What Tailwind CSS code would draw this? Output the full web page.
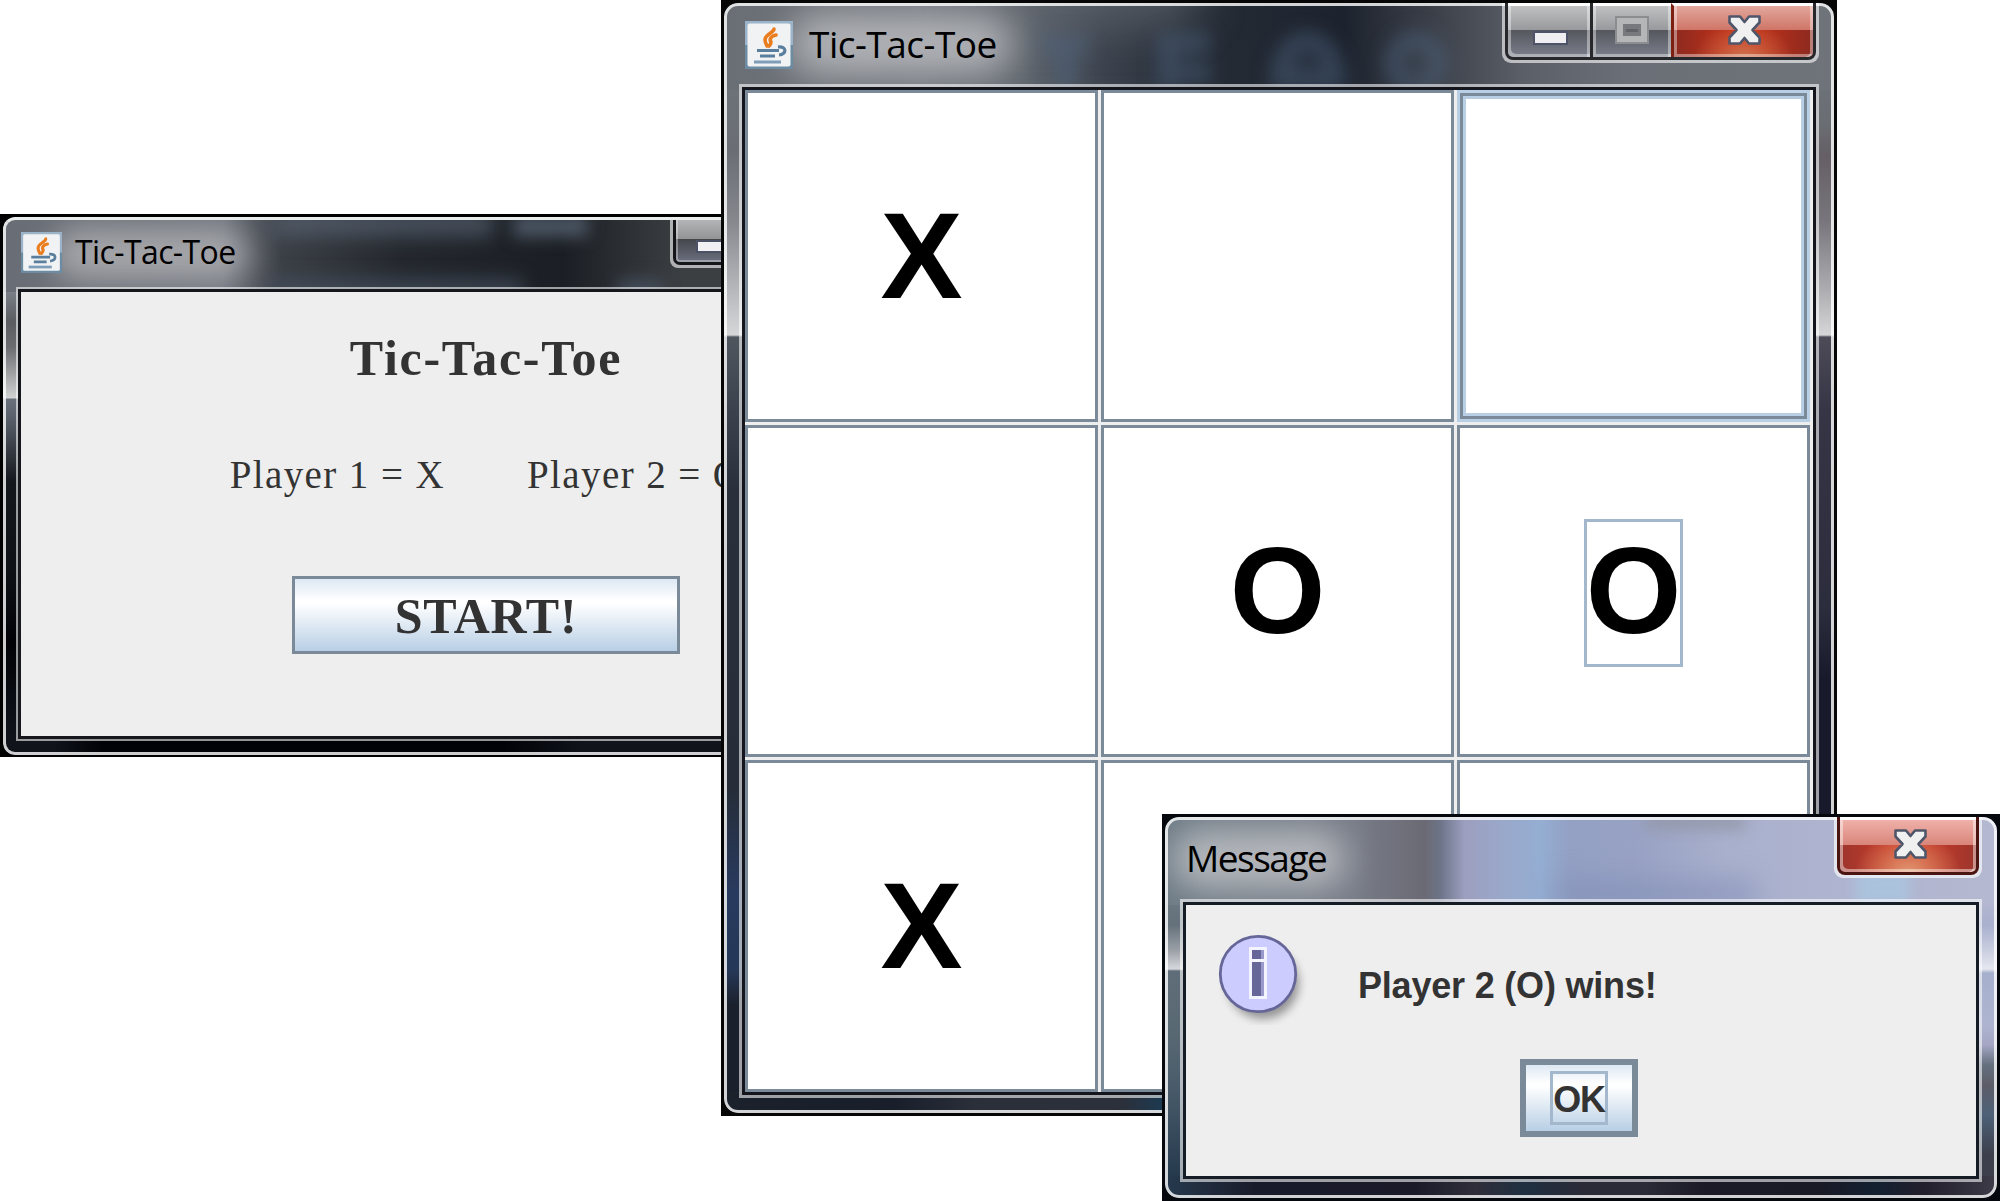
<!DOCTYPE html>
<html lang="en">
<head>
<meta charset="utf-8">
<title>Tic-Tac-Toe</title>
<script src="https://cdn.jsdelivr.net/npm/@tailwindcss/browser@4"></script>
</head>
<body class="relative w-[2000px] h-[1201px] overflow-hidden bg-white">

<svg class="hidden">
  <symbol id="java" viewBox="0 0 48 48">
    <rect width="48" height="48" fill="#6c8ca3"/>
    <rect width="48" height="24" fill="#9bb4c9"/>
    <rect x="2.500" y="2.500" width="43" height="43" rx="2" fill="#f1f2f3"/>
    <g fill="none" stroke="#ea7d1e" stroke-width="3.600" stroke-linecap="round">
      <path d="M29 8c0 4-9 5-9 11 0 2 1 4 2 6"/>
      <path d="M31 14c-5 1-7 4-5 7 0 2-1 3-2 4"/>
    </g>
    <g fill="none" stroke="#5a7f9e" stroke-width="3.200">
      <path d="M12 29.500h22M15 35h15"/>
      <path d="M33 26c9-1 9 7 1 8"/>
      <path d="M9 41h27" stroke="#7d9db8"/>
    </g>
  </symbol>
  <symbol id="close" viewBox="0 0 33 30">
    <path d="M1.500 1.500h10.500l4.500 5.500L21 1.500h10.500v6L24.500 15l7 7.500v6H21L16.500 23 12 28.500H1.500v-6L8.500 15l-7-7.500z" fill="#f0f0f0" stroke="#50566a" stroke-width="2.600" stroke-linejoin="round"/>
  </symbol>
</svg>

<!-- Start window -->
<div class="absolute isolate left-0 top-[214px] w-[972px] h-[543px] bg-black p-[3px] pb-[2px]">
  <div class="relative w-full h-full rounded-[12px] overflow-hidden flex flex-col bg-[#05070c]">
    <div class="relative h-[75px] flex items-start bg-[linear-gradient(90deg,#686d76_0,#6d7179_90px,#6f747d_220px,#3b3f46_280px,#24282e_400px,#1b1e24_560px,#3c3f42_680px)]">
      <div class="absolute left-[50px] top-[12px] w-[195px] h-[50px] rounded-full bg-[#b4b4b6]/80 blur-[15px]"></div>
      <div class="absolute left-[270px] top-[-4px] w-[220px] h-[22px] bg-[#5d6878]/70 blur-[10px]"></div>
      <div class="absolute left-[510px] top-[-2px] w-[75px] h-[22px] bg-[#5f6e7f]/70 blur-[8px]"></div>
      <div class="absolute left-[270px] top-[62px] w-[250px] h-[20px] bg-[#475363]/70 blur-[9px]"></div>
      <div class="absolute left-[615px] top-[62px] w-[45px] h-[20px] bg-[#475363]/80 blur-[8px]"></div>
      <svg class="relative ml-[18px] mt-[15px] w-[41px] h-[41px]"><use href="#java"/></svg>
      <div class="relative ml-[13px] mt-[14px] text-[32px] leading-[42px] text-black font-['Open_Sans',sans-serif] tracking-[-0.6px] whitespace-nowrap">Tic-Tac-Toe</div>
      <div class="absolute left-[667px] top-0 w-[240px] h-[51px] rounded-b-[8px] bg-white/60 px-[3px] pb-[3px]">
        <div class="w-full h-full rounded-b-[7px] bg-[#15161a] px-[3px] pb-[3px] flex">
          <div class="w-full h-full rounded-b-[4px] bg-[linear-gradient(#b9babb,#929395_50%,#45474c_50%,#6c7080)] shadow-[inset_0_0_0_2px_rgba(255,255,255,.35)] pt-[25px] pl-[22px]">
            <div class="w-[30px] h-[9px] bg-[#f1f1f3] shadow-[0_0_0_2px_#4d5166]"></div>
          </div>
        </div>
      </div>
    </div>
    <div class="flex h-[444px]">
      <div class="w-[18px] bg-[linear-gradient(#7a7f88_0,#5a5c60_30px,#6a6c70_55px,#d2d3d3_106px,#6b717c_107px,#5a616c_125px,#14171c_190px,#0e1116_280px,#000207_350px,#10131a_444px)]"></div>
      <div class="relative z-10 w-[930px] h-full bg-[#eee] shadow-[0_0_0_3px_#15171c,0_0_0_5px_rgba(255,255,255,.58)] flex flex-col items-center text-[#333] font-['Liberation_Serif',serif]">
        <div class="mt-[37px] text-[50px] leading-[58px] font-bold tracking-[1.7px] whitespace-nowrap">Tic-Tac-Toe</div>
        <div class="mt-[65px] flex gap-[82px] text-[39px] leading-[46px] tracking-[1.4px] whitespace-nowrap"><span>Player 1 = X</span><span>Player 2 = O</span></div>
        <div class="mt-[78px] w-[388px] h-[78px] border-[3px] border-[#7a8a99] bg-[linear-gradient(#dde8f3,#fff_30%,#fff_34%,#b8cfe5)] text-[50px] leading-[74px] font-bold text-center tracking-[0.8px]">START!</div>
      </div>
      <div class="flex-1"></div>
    </div>
    <div class="flex-1 bg-[linear-gradient(90deg,#10131a_50px,#000207_100px,#000207_500px,#10131a_580px)]"></div>
    <div class="absolute inset-0 rounded-[12px] border-[3px] border-white/80 border-t-[#e8ecea]"></div>
  </div>
</div>

<!-- Board window -->
<div class="absolute isolate left-[721px] top-0 w-[1116px] h-[1116px] bg-[#060607] p-[3px]">
  <div class="relative w-full h-full rounded-[14px] overflow-hidden flex flex-col">
    <div class="relative h-[87px] flex items-start bg-[linear-gradient(90deg,#6a6f75_0,#6e7279_200px,#5f656d_300px,#3c434e_380px,#262d37_460px,#1d232e_620px,#3c4049_710px,#5b6068_800px,#6a6f77_900px,#6f747a_1110px)]">
      <div class="absolute left-[240px] -top-[40px] w-[240px] h-[66px] rounded-full bg-[#626870]/60 blur-[20px]"></div>
      <div class="absolute left-[65px] top-[10px] w-[225px] h-[62px] rounded-full bg-[#c0c2c6]/80 blur-[18px]"></div>
      <svg class="absolute left-0 top-0 w-[780px] h-[87px] blur-[9px]" fill="none" stroke="#4d6480" stroke-opacity=".5" stroke-width="20">
        <path d="M316 42h48M342 42v50"/>
        <path d="M444 30v60M440 40h46M440 70h46"/>
        <path d="M556 78c2-52 52-52 56 0zM560 74h48"/>
        <circle cx="692" cy="60" r="22"/>
      </svg>
      <svg class="relative ml-[21px] mt-[18px] w-[48px] h-[48px]"><use href="#java"/></svg>
      <div class="relative ml-[16px] mt-[16px] text-[37px] leading-[50px] text-black font-['Open_Sans',sans-serif] tracking-[-0.5px] whitespace-nowrap">Tic-Tac-Toe</div>
      <div class="absolute right-[15px] top-0 z-30 w-[317px] h-[60px] rounded-b-[9px] bg-white/60 px-[3px] pb-[3px]">
        <div class="w-full h-full rounded-b-[8px] bg-[#26282c] px-[3px] pb-[3px] flex gap-[3px]">
          <div class="w-[82px] rounded-bl-[5px] border-t-[3px] border-white bg-[linear-gradient(#bfc1c3,#97999c_47%,#54575d_47%,#7b7f8c)] shadow-[inset_3px_-3px_0_rgba(255,255,255,.4),inset_-3px_0_0_rgba(255,255,255,.4)] pt-[27px] pl-[27px]">
            <div class="w-[31px] h-[10px] bg-[#efeff1] shadow-[0_0_0_2px_#4f5368]"></div>
          </div>
          <div class="w-[78px] border-t-[3px] border-white bg-[linear-gradient(#bfc1c3,#97999c_47%,#54575d_47%,#7b7f8c)] shadow-[inset_3px_-3px_0_rgba(255,255,255,.4),inset_-3px_0_0_rgba(255,255,255,.4)] pt-[12px] pl-[24px]">
            <div class="w-[30px] h-[24px] border-[6px] border-[#b5b6b8] bg-[#77797c] shadow-[0_0_0_2px_#8b8d90]"><div class="ml-[3px] mt-[5px] w-[12px] h-[3px] bg-[#5f6266]"></div></div>
          </div>
          <div class="relative -ml-[3px] w-[142px] border-l-[3px] border-l-[#7d2014] rounded-br-[5px] border-t-[3px] border-t-white bg-[linear-gradient(#e2a79c,#cf7567_47%,transparent_47%),radial-gradient(ellipse_at_50%_100%,#d0714c_0,transparent_50%),linear-gradient(90deg,#8c2a20,#c03018_40%,#c03018_60%,#8c2a20)] shadow-[inset_3px_-3px_0_rgba(255,255,255,.4),inset_-3px_0_0_rgba(255,255,255,.4)] flex justify-center pt-[9px] pl-[2px]">
            <svg class="w-[33px] h-[30px]"><use href="#close"/></svg>
          </div>
        </div>
      </div>
    </div>
    <div class="flex h-[1002px]">
      <div class="w-[21px] bg-[linear-gradient(#6d7279_0,#6a6d74_60px,#85878d_130px,#d6d7d9_245px,#50565e_247px,#3b424d_320px,#292f3b_400px,#262d39_700px,#283a5e_800px,#263858_880px,#1b212c_915px)]"></div>
      <div class="relative z-10 w-[1068px] h-full bg-[#eee] shadow-[0_0_0_3px_#15161d,0_0_0_6px_rgba(255,255,255,.58)]">
        <div class="grid grid-cols-[353px_353px_353px] grid-rows-[332px_332px_332px] gap-[3px] text-black text-[123px] leading-none font-bold font-['Liberation_Sans',Arial,sans-serif]">
          <div class="flex items-center justify-center bg-white border-[3px] border-[#7a8a99] pb-[2px]">X</div>
          <div class="bg-white border-[3px] border-[#7a8a99]"></div>
          <div class="bg-white border-[3px] border-[#b8cfe5] shadow-[inset_0_0_0_3px_#7a8a99,inset_0_0_0_6px_#b8cfe5]"></div>
          <div class="bg-white border-[3px] border-[#7a8a99]"></div>
          <div class="flex items-center justify-center bg-white border-[3px] border-[#7a8a99] pb-[2px]">O</div>
          <div class="flex items-center justify-center bg-white border-[3px] border-[#7a8a99] pt-[3px]"><span class="w-[99px] h-[148px] border-[3px] border-[#a3b8cc] flex items-center justify-center pb-[5px]">O</span></div>
          <div class="flex items-center justify-center bg-white border-[3px] border-[#7a8a99] pb-[2px]">X</div>
          <div class="bg-white border-[3px] border-[#7a8a99]"></div>
          <div class="bg-white border-[3px] border-[#7a8a99]"></div>
        </div>
      </div>
      <div class="w-[21px] bg-[linear-gradient(#6c7178_0,#6a6d72_35px,#655f65_65px,#77757b_130px,#adadb1_200px,#d6d6d8_245px,#4d4b57_247px,#363546_320px,#2b2c3c_520px,#18192a_590px)]"></div>
    </div>
    <div class="flex-1 bg-[linear-gradient(90deg,#1c222c_0,#181e2a_170px,#2a2f3a_250px,#2b303b_400px,#1c3a52_440px)]"></div>
    <div class="absolute inset-0 rounded-[14px] border-[3px] border-white/80"></div>
  </div>
</div>

<!-- Result dialog -->
<div class="absolute isolate left-[1162px] top-[814px] w-[838px] h-[387px] bg-[#05090d] p-[3px]">
  <div class="relative w-full h-full rounded-[14px] overflow-hidden flex flex-col">
    <div class="relative h-[88px] flex items-start bg-[linear-gradient(90deg,#6c7a84_0,#777c87_190px,#6b6a74_260px,#6c7488_275px,#9d9fbf_300px,#99a8cb_340px,#94aed2_375px,#93a0c4_405px,#98a2c4_470px,#a9b0cd_560px,#b0b5d0_700px,#b4b8d0_832px)]">
      <div class="absolute left-[390px] top-[65px] w-[200px] h-[24px] bg-[#7f8bb5]/70 blur-[14px]"></div>
      <div class="absolute left-[480px] top-[-4px] w-[100px] h-[16px] bg-[#9297a8] blur-[8px]"></div>
      <div class="absolute left-[690px] top-[55px] w-[55px] h-[32px] bg-[#aac6e0]/80 blur-[6px]"></div>
      <div class="absolute left-[6px] top-[12px] w-[175px] h-[60px] rounded-full bg-[#c6c7cb]/80 blur-[17px]"></div>
      <div class="relative ml-[21px] mt-[16px] text-[37px] leading-[50px] text-black font-['Open_Sans',sans-serif] tracking-[-1.5px] whitespace-nowrap">Message</div>
      <div class="absolute right-[15px] top-0 z-30 w-[148px] h-[61px] rounded-b-[9px] bg-white/65 px-[3px] pb-[3px]">
        <div class="w-full h-full rounded-b-[8px] bg-[#4a1410] px-[3px] pb-[3px]">
          <div class="w-full h-full rounded-b-[5px] border-t-[3px] border-t-white bg-[linear-gradient(#efb1a9,#d9857a_48%,transparent_48%),radial-gradient(ellipse_at_50%_100%,#e09670_0,transparent_55%),linear-gradient(90deg,#9c352d,#cb3c28_40%,#cb3c28_60%,#9c352d)] shadow-[inset_3px_-3px_0_rgba(255,255,255,.45),inset_-3px_0_0_rgba(255,255,255,.45)] flex justify-center pt-[9px] pl-[5px]">
            <svg class="w-[33px] h-[30px]"><use href="#close"/></svg>
          </div>
        </div>
      </div>
    </div>
    <div class="flex h-[271px]">
      <div class="w-[21px] bg-[linear-gradient(#66747e_0,#65727b_20px,#9a9fa6_45px,#d6d8dc_64px,#5f6d78_66px,#586873_130px,#4a5c6b_180px,#263a4e_271px)]"></div>
      <div class="relative z-10 w-[790px] h-full bg-[#eee] shadow-[0_0_0_3px_#161c26,0_0_0_6px_rgba(255,255,255,.58)] flex flex-col text-[#333] font-bold font-['Liberation_Sans',Arial,sans-serif]">
        <div class="flex items-start">
          <svg class="ml-[27px] mt-[24px] w-[96px] h-[96px]" viewBox="0 0 96 96">
            <circle cx="50" cy="54" r="36" fill="#000" opacity=".38" class="blur-[5px]"/>
            <circle cx="45" cy="45" r="37.700" fill="#ccccff" stroke="#666699" stroke-width="2.800"/>
            <rect x="36" y="18" width="18" height="52" fill="#f4f4ff"/>
            <path d="M39 21h12v9H39zM39 33h12v34H39z" fill="#666699"/>
            <path d="M48 21h3v9h-3zM48 33h3v34h-3z" fill="#9999cc"/>
          </svg>
          <div class="ml-[49px] mt-[59px] text-[36px] leading-[44px] tracking-[-0.2px] whitespace-nowrap">Player 2 (O) wins!</div>
        </div>
        <div class="ml-[334px] mt-[34px] w-[118px] h-[78px] border-[6px] border-[#7a8a99] bg-[linear-gradient(#dde8f3,#fff_28%,#fff_32%,#b8cfe5)] flex items-center justify-center">
          <span class="w-[58px] h-[54px] border-[3px] border-[#a3b8cc] flex items-center justify-center text-[36px] tracking-[-1.2px] leading-none pt-[4px]">OK</span>
        </div>
      </div>
      <div class="w-[21px] bg-[linear-gradient(#b2b6cf_0,#a9b0cd_20px,#d0d4e4_50px,#e6e8f0_64px,#a5b0cc_68px,#aeb4d0_120px,#a4a6c4_140px,#64707e_160px,#5c5c68_180px,#4d6178_210px,#3d3f4c_250px)]"></div>
    </div>
    <div class="flex-1 bg-[linear-gradient(90deg,#263a4e_0,#1a1b2a_90px,#1a1a29_250px,#302e3a_310px,#1f3040_360px,#2b2a37_420px,#2b2a37_480px,#1c1a27_540px,#1a1a27_660px,#122030_710px,#241f2d_760px,#3d3c48_832px)]"></div>
    <div class="absolute inset-0 rounded-[14px] border-[3px] border-white/80"></div>
  </div>
</div>
</body>
</html>
